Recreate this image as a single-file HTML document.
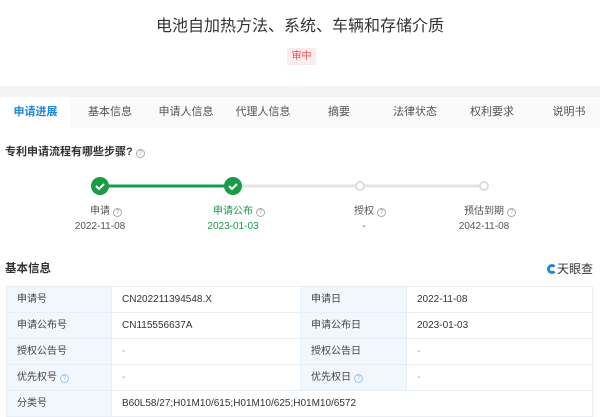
<!DOCTYPE html>
<html><head><meta charset="utf-8"><style>
*{margin:0;padding:0;box-sizing:border-box}
body{width:600px;height:416px;overflow:hidden;background:#fff;font-family:"Liberation Sans","Noto Sans CJK SC",sans-serif;color:#333;position:relative}
.a{position:absolute;white-space:nowrap}
.title{top:16px;left:0;width:600px;text-align:center;font-size:16px;line-height:22px;color:#333}
.badge{top:48px;left:287px;width:29px;height:17px;background:#fdecec;color:#f0504f;font-size:10px;line-height:17px;text-align:center}
.band{top:86px;left:0;width:600px;height:11px;background:#f3f3f3}
.tabs{top:97px;left:0;width:600px;height:31px;background:#fafafa}
.tab{top:97px;height:31px;line-height:31px;font-size:11px;color:#555;transform:translateX(-50%)}
.act{top:97px;left:0;width:71px;height:31px;background:#fff;color:#1d86e0;font-size:11px;font-weight:bold;line-height:31px;text-align:center}
.h{font-size:11px;font-weight:bold;color:#333;line-height:14px}
.q{display:inline-block;width:9px;height:9px;border:1px solid #aaa;border-radius:50%;font-size:7px;line-height:7px;text-align:center;color:#aaa;font-weight:normal;vertical-align:0px;margin-left:3px}
.lbl{font-size:10px;line-height:12px;color:#555;transform:translateX(-50%)}
table{position:absolute;left:6px;top:286px;width:587px;border-collapse:collapse;font-size:10px;table-layout:fixed}
td{height:26px;border:1px solid #e9eff6;padding:0 0 0 10px;color:#333;line-height:12px;vertical-align:middle}
td.l{background:#f2f7fd;color:#444}
td.g{color:#999}
</style></head><body>
<div class="a title">电池自加热方法、系统、车辆和存储介质</div>
<div class="a badge">审中</div>
<div class="a band"></div>
<div class="a tabs"></div>
<div class="a act">申请进展</div>
<div class="a tab" style="left:110px">基本信息</div>
<div class="a tab" style="left:186px">申请人信息</div>
<div class="a tab" style="left:263px">代理人信息</div>
<div class="a tab" style="left:339px">摘要</div>
<div class="a tab" style="left:415px">法律状态</div>
<div class="a tab" style="left:492px">权利要求</div>
<div class="a tab" style="left:569px">说明书</div>
<div class="a h" style="left:5px;top:145px">专利申请流程有哪些步骤?<span class="q">?</span></div>
<svg class="a" style="left:0;top:170px" width="600" height="35">
<line x1="100" y1="16" x2="233" y2="16" stroke="#1a9b45" stroke-width="3"/>
<line x1="233" y1="16" x2="484" y2="16" stroke="#e4e4e4" stroke-width="3"/>
<circle cx="100" cy="16" r="9" fill="#1a9b45"/>
<circle cx="233" cy="16" r="9" fill="#1a9b45"/>
<path d="M96 16l3 3 5-5" stroke="#fff" stroke-width="2" fill="none"/>
<path d="M229 16l3 3 5-5" stroke="#fff" stroke-width="2" fill="none"/>
<circle cx="360" cy="16" r="4" fill="#fff" stroke="#ddd" stroke-width="2"/>
<circle cx="484" cy="16" r="4" fill="#fff" stroke="#ddd" stroke-width="2"/>
</svg>
<div class="a lbl" style="left:106px;top:206px">申请<span class="q">?</span></div>
<div class="a lbl" style="left:100px;top:221px">2022-11-08</div>
<div class="a lbl" style="left:239px;top:206px;color:#1a9b45">申请公布<span class="q">?</span></div>
<div class="a lbl" style="left:233px;top:221px;color:#1a9b45">2023-01-03</div>
<div class="a lbl" style="left:370px;top:206px">授权<span class="q">?</span></div>
<div class="a lbl" style="left:364px;top:221px">-</div>
<div class="a lbl" style="left:490px;top:206px">预估到期<span class="q">?</span></div>
<div class="a lbl" style="left:484px;top:221px">2042-11-08</div>
<div class="a h" style="left:5px;top:262px;font-size:11.5px">基本信息</div>
<div class="a" style="left:547px;top:262px;font-size:12px;line-height:14px;color:#333"><span style="display:inline-block;width:10px;height:10px;border-radius:50%;border:3px solid #1d86e0;border-right-color:transparent;vertical-align:-1px"></span>天眼查</div>
<table>
<tr><td class="l" style="width:105px">申请号</td><td style="width:189px">CN202211394548.X</td><td class="l" style="width:106px">申请日</td><td>2022-11-08</td></tr>
<tr><td class="l">申请公布号</td><td>CN115556637A</td><td class="l">申请公布日</td><td>2023-01-03</td></tr>
<tr><td class="l">授权公告号</td><td class="g">-</td><td class="l">授权公告日</td><td class="g">-</td></tr>
<tr><td class="l">优先权号<span class="q" style="border-color:#9cc4ec;color:#9cc4ec">?</span></td><td class="g">-</td><td class="l">优先权日<span class="q" style="border-color:#9cc4ec;color:#9cc4ec">?</span></td><td class="g">-</td></tr>
<tr><td class="l">分类号</td><td colspan="3">B60L58/27;H01M10/615;H01M10/625;H01M10/6572</td></tr>
</table>
</body></html>
